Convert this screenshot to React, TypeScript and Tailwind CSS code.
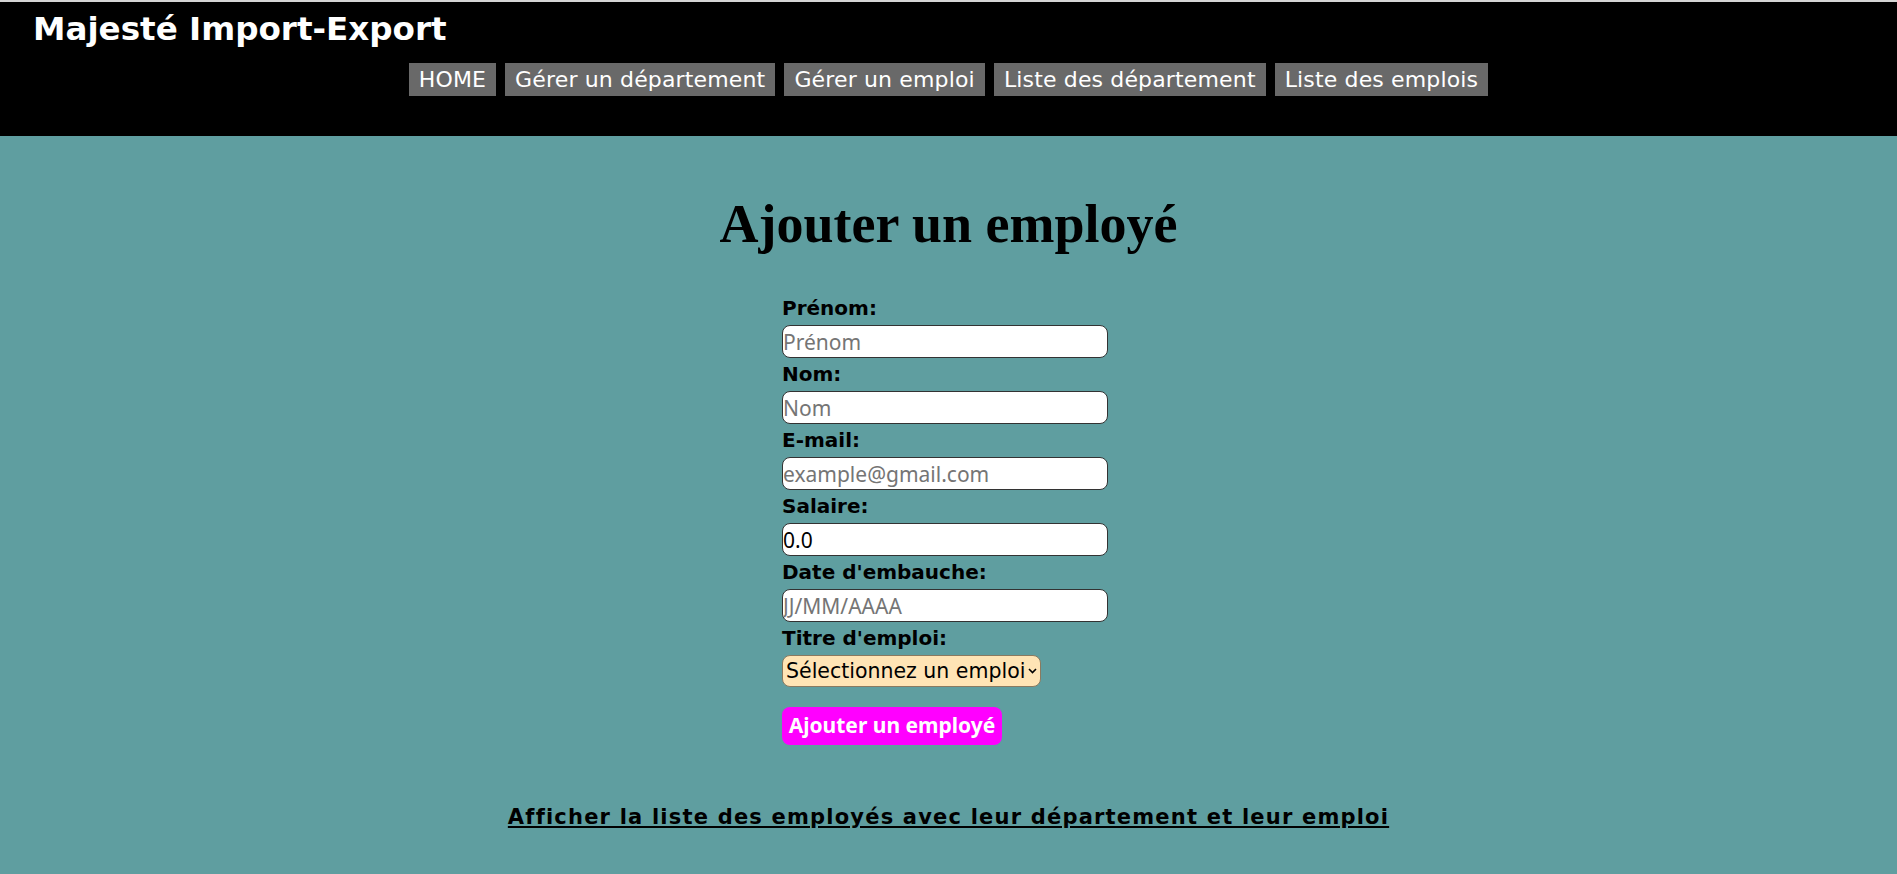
import React from "react";

const dejavu = { fontFamily: '"Comic Sans MS", "DejaVu Sans", sans-serif' };
const noto = { fontFamily: '"Comic Sans MS", "Noto Sans", sans-serif' };

function Field({ label, placeholder, value }: { label: string; placeholder?: string; value?: string }) {
  return (
    <div className="flex flex-col">
      <label className="h-[33px] text-[20px] font-bold leading-[33px] text-black" style={dejavu}>
        {label}
      </label>
      <input
        className="h-[33px] w-[326px] rounded-[8px] border border-[#333] bg-white px-0 text-[21px] leading-[31px] text-black placeholder:text-[#757575] outline-none"
        placeholder={placeholder}
        defaultValue={value}
        style={noto}
      />
    </div>
  );
}

export default function App() {
  const nav = ["HOME", "Gérer un département", "Gérer un emploi", "Liste des département", "Liste des emplois"];
  return (
    <div className="min-h-[874px] w-full bg-[#5f9ea0]" style={dejavu}>
      <header className="h-[136px] border-t-2 border-[#d4d4d4] bg-black">
        <div className="pl-[33px] pt-[5px] text-[32.6px] font-bold leading-[44px] text-white">Majesté Import-Export</div>
        <nav className="mt-[12px] flex justify-center gap-[9px]" style={{ fontFamily: '"DejaVu Sans", sans-serif' }}>
          {nav.map((n) => (
            <a key={n} className="block h-[33px] bg-[#696969] px-[10px] text-[22px] leading-[33px] tracking-[0.15px] text-white">
              {n}
            </a>
          ))}
        </nav>
      </header>
      <main className="flex flex-col items-center">
        <h1
          className="mt-[58px] text-[54px] font-bold leading-[60px] text-black"
          style={{ fontFamily: '"Liberation Serif", "Times New Roman", serif' }}
        >
          Ajouter un employé
        </h1>
        <form className="mt-[38px] flex w-[333px] flex-col" onSubmit={(e) => e.preventDefault()}>
          <Field label="Prénom:" placeholder="Prénom" />
          <Field label="Nom:" placeholder="Nom" />
          <Field label="E-mail:" placeholder="example@gmail.com" />
          <Field label="Salaire:" value="0.0" />
          <Field label="Date d'embauche:" placeholder="JJ/MM/AAAA" />
          <label className="h-[33px] text-[20px] font-bold leading-[33px] text-black">Titre d'emploi:</label>
          <div className="relative h-[32px] w-[259px]">
            <select
              className="h-[32px] w-[259px] appearance-none rounded-[8px] border border-[#8a7a60] bg-[#ffe4b5] pl-[3px] pr-[12px] text-[20.5px] leading-[30px] text-black outline-none"
              style={dejavu}
              defaultValue=""
            >
              <option value="">Sélectionnez un emploi</option>
            </select>
            <svg className="pointer-events-none absolute right-[4px] top-[13px]" width="9" height="6" viewBox="0 0 9 6">
              <path d="M1 1 L4.5 4.5 L8 1" stroke="#000" strokeWidth="1.6" fill="none" />
            </svg>
          </div>
          <button
            type="submit"
            className="mt-[20px] h-[38px] w-[220px] rounded-[8px] bg-[#ff00ff] text-[21px] font-bold text-white"
            style={noto}
          >
            Ajouter un employé
          </button>
        </form>
        <a
          className="mt-[57px] text-[21px] font-bold tracking-[1.2px] text-black underline"
          style={{ fontFamily: '"DejaVu Sans", sans-serif' }}
        >
          Afficher la liste des employés avec leur département et leur emploi
        </a>
      </main>
    </div>
  );
}
